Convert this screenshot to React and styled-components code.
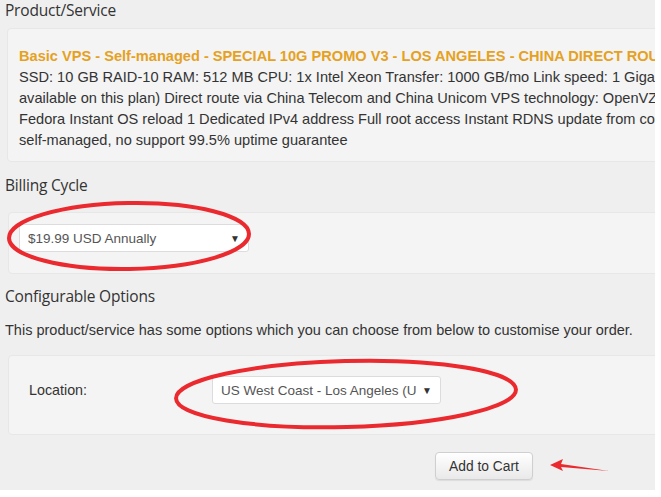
import React from 'react';
import styled, { createGlobalStyle } from 'styled-components';

const GlobalStyle = createGlobalStyle`
  html, body {
    margin: 0;
    padding: 0;
    background: #fff;
  }
`;

const Page = styled.div`
  position: relative;
  width: 655px;
  height: 490px;
  overflow: hidden;
  background: #efefef;
  padding: 0 0 0 5px;
  box-sizing: border-box;
  font-family: "Liberation Sans", Arial, sans-serif;
  color: #333;
`;

const Heading = styled.h3`
  margin: ${props => props.$top || 0}px 0 0 0;
  font-family: "Open Sans", "Noto Sans", sans-serif;
  font-weight: 400;
  font-size: 15.5px;
  line-height: 21px;
  color: #333;
  letter-spacing: -0.2px;
`;

const Well = styled.div`
  margin: ${props => props.$top || 0}px 0 0 ${props => props.$left || 2}px;
  width: 760px;
  height: ${props => props.$height}px;
  box-sizing: border-box;
  background: #f4f4f4;
  border: 1px solid #e7e7e7;
  border-radius: 4px;
  padding: ${props => props.$pad};
  display: flex;
  flex-direction: column;
`;

const Line = styled.div`
  white-space: nowrap;
  font-size: 14.6px;
  line-height: 21px;
  color: ${props => (props.$title ? '#e5a11f' : '#333')};
  font-weight: ${props => (props.$title ? 700 : 400)};
`;

const SelectBox = styled.div`
  width: ${props => props.$width}px;
  height: 28px;
  box-sizing: border-box;
  background: #fff;
  border: 1px solid #dcdcdc;
  border-radius: 3px;
  display: flex;
  align-items: center;
  justify-content: space-between;
  padding: 0 8px 0 8px;
  font-size: 13.5px;
  color: #555;
`;

const Caret = styled.span`
  font-size: 10px;
  color: #333;
`;

const Intro = styled.p`
  margin: 14px 0 0 0;
  font-size: 14.5px;
  line-height: 18px;
  white-space: nowrap;
  color: #333;
`;

const OptionRow = styled.div`
  display: flex;
  align-items: center;
`;

const OptionLabel = styled.label`
  width: 183px;
  font-size: 14.3px;
  color: #333;
`;

const Footer = styled.div`
  display: flex;
  padding: 17px 0 0 430px;
`;

const Button = styled.button`
  width: 98px;
  height: 28px;
  border: 1px solid #cfcfcf;
  border-radius: 4px;
  background: linear-gradient(#ffffff, #e9e9e9);
  box-shadow: 0 1px 1px rgba(0, 0, 0, 0.08);
  font-family: "Liberation Sans", Arial, sans-serif;
  font-size: 13.8px;
  color: #333;
  padding: 0;
`;

const Marks = styled.svg`
  position: absolute;
  left: 0;
  top: 0;
  pointer-events: none;
`;

const Annotations = () => (
  <Marks width="655" height="490">
    <ellipse cx="129" cy="236" rx="120" ry="33" fill="none" stroke="#ea2a2e" strokeWidth="4" transform="rotate(-1 129 236)" />
    <ellipse cx="346" cy="394" rx="170" ry="33" fill="none" stroke="#ea2a2e" strokeWidth="4" transform="rotate(-1.5 346 394)" />
    <path d="M550 465 L563 459 L561 464 L609 471 L561 467 L563 471 Z" fill="#ea2a2e" />
  </Marks>
);

export default function App() {
  return (
    <>
      <GlobalStyle />
      <Page>
        <Heading>Product/Service</Heading>
        <Well $top={7} $height={134} $pad="17px 11px 0 11px">
          <Line $title>Basic VPS - Self-managed - SPECIAL 10G PROMO V3 - LOS ANGELES - CHINA DIRECT ROUTE</Line>
          <Line>SSD: 10 GB RAID-10 RAM: 512 MB CPU: 1x Intel Xeon Transfer: 1000 GB/mo Link speed: 1 Gigabit (DDoS protection not</Line>
          <Line>available on this plan) Direct route via China Telecom and China Unicom VPS technology: OpenVZ/KVM OS: CentOS, Debian, Ubuntu,</Line>
          <Line>Fedora Instant OS reload 1 Dedicated IPv4 address Full root access Instant RDNS update from control panel</Line>
          <Line>self-managed, no support 99.5% uptime guarantee</Line>
        </Well>
        <Heading $top={13}>Billing Cycle</Heading>
        <Well $top={16} $height={62} $left={3} $pad="11px 10px">
          <SelectBox $width={230}>
            <span>$19.99 USD Annually</span>
            <Caret>▼</Caret>
          </SelectBox>
        </Well>
        <Heading $top={12}>Configurable Options</Heading>
        <Intro>This product/service has some options which you can choose from below to customise your order.</Intro>
        <Well $top={16} $height={80} $left={3} $pad="20px 20px">
          <OptionRow>
            <OptionLabel>Location:</OptionLabel>
            <SelectBox $width={229}>
              <span>US West Coast - Los Angeles (U</span>
              <Caret>▼</Caret>
            </SelectBox>
          </OptionRow>
        </Well>
        <Footer>
          <Button>Add to Cart</Button>
        </Footer>
        <Annotations />
      </Page>
    </>
  );
}
